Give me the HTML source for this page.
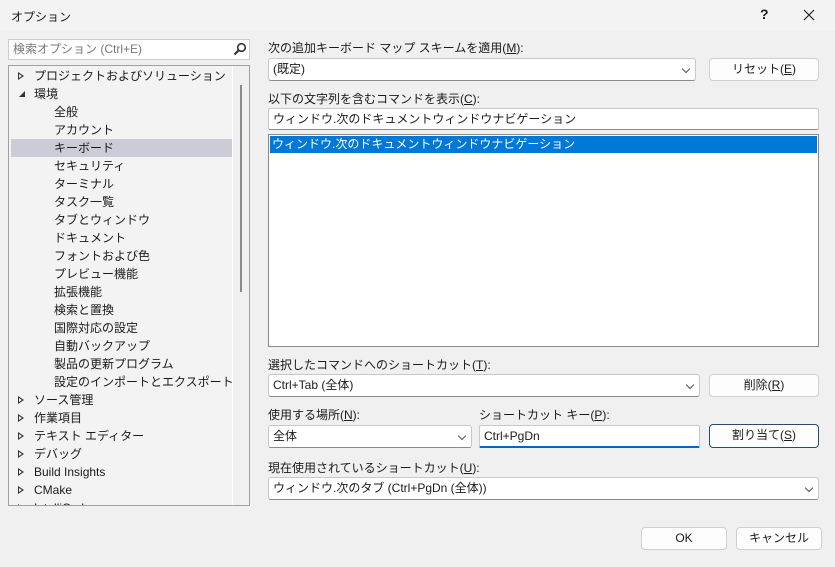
<!DOCTYPE html>
<html><head><meta charset="utf-8"><style>
*{box-sizing:border-box;margin:0;padding:0}
body{width:835px;height:567px;background:#f0f0f0;font-family:"Liberation Sans","Noto Sans CJK JP",sans-serif;font-size:12px;color:#1a1a1a;position:relative;overflow:hidden}
.a{position:absolute;white-space:nowrap}
.box{position:absolute;background:#fff;border:1px solid #c8c8c8;border-bottom-color:#8a8a8a;border-radius:3px;padding-left:4px;line-height:20px}
.btn{position:absolute;background:#fdfdfd;border:1px solid #d0d0d0;border-radius:4px;text-align:center;line-height:20px}
.chev{position:absolute;right:6px;top:7px;width:6px;height:6px;border-right:1px solid #555;border-bottom:1px solid #555;transform:rotate(45deg)}
.tree div{position:absolute;height:18px;line-height:18px;white-space:nowrap}
.tri{position:absolute;left:9px;top:5px;width:0;height:0;border-top:4px solid transparent;border-bottom:4px solid transparent;border-left:6px solid #333}
.tri:after{content:"";position:absolute;left:-5px;top:-2px;border-top:2px solid transparent;border-bottom:2px solid transparent;border-left:3px solid #f3f3f3}
u{text-decoration:underline}
</style></head><body>
<div class="a" style="left:0;top:0;width:835px;height:31px;background:#f3f3f3"></div>
<div class="a" style="left:11px;top:8px;font-size:12px">オプション</div>
<div class="a" style="left:760px;top:6px;font-size:14px;font-weight:bold">?</div>
<svg class="a" style="left:803px;top:9px" width="12" height="12"><path d="M1 1L11 11M11 1L1 11" stroke="#222" stroke-width="1.2"/></svg>

<div class="a" style="left:8px;top:39px;width:242px;height:21px;background:#fff;border:1px solid #ccc;padding-left:4px;line-height:19px;color:#777">検索オプション (Ctrl+E)</div>
<svg class="a" style="left:233px;top:42px" width="14" height="14"><circle cx="8.5" cy="5.5" r="3.8" fill="none" stroke="#333" stroke-width="1.6"/><line x1="6" y1="8" x2="1.5" y2="12.5" stroke="#333" stroke-width="2.2"/></svg>

<div class="a tree" style="left:8px;top:65px;width:242px;height:441px;border:1px solid #a0a0a0;background:#f3f3f3;overflow:hidden">
<div style="left:223px;top:0;width:17px;height:440px;background:#f0f0f0;border-left:1px solid #fff"></div>
<div style="left:231px;top:19px;width:2px;height:207px;background:#8a8a8a"></div>
<div style="left:2px;top:73px;width:221px;background:#cbccd6"></div>
<div style="left:0;top:1px"><span class="tri"></span><span style="margin-left:25px">プロジェクトおよびソリューション</span></div>
<div style="left:0;top:19px"><span style="position:absolute;left:10px;top:6px;border-left:6px solid transparent;border-bottom:6px solid #333"></span><span style="margin-left:25px">環境</span></div>
<div style="left:45px;top:37px">全般</div>
<div style="left:45px;top:55px">アカウント</div>
<div style="left:45px;top:73px">キーボード</div>
<div style="left:45px;top:91px">セキュリティ</div>
<div style="left:45px;top:109px">ターミナル</div>
<div style="left:45px;top:127px">タスク一覧</div>
<div style="left:45px;top:145px">タブとウィンドウ</div>
<div style="left:45px;top:163px">ドキュメント</div>
<div style="left:45px;top:181px">フォントおよび色</div>
<div style="left:45px;top:199px">プレビュー機能</div>
<div style="left:45px;top:217px">拡張機能</div>
<div style="left:45px;top:235px">検索と置換</div>
<div style="left:45px;top:253px">国際対応の設定</div>
<div style="left:45px;top:271px">自動バックアップ</div>
<div style="left:45px;top:289px">製品の更新プログラム</div>
<div style="left:45px;top:307px">設定のインポートとエクスポート</div>
<div style="left:0;top:325px"><span class="tri"></span><span style="margin-left:25px">ソース管理</span></div>
<div style="left:0;top:343px"><span class="tri"></span><span style="margin-left:25px">作業項目</span></div>
<div style="left:0;top:361px"><span class="tri"></span><span style="margin-left:25px">テキスト エディター</span></div>
<div style="left:0;top:379px"><span class="tri"></span><span style="margin-left:25px">デバッグ</span></div>
<div style="left:0;top:397px"><span class="tri"></span><span style="margin-left:25px">Build Insights</span></div>
<div style="left:0;top:415px"><span class="tri"></span><span style="margin-left:25px">CMake</span></div>
<div style="left:0;top:433px"><span class="tri"></span><span style="margin-left:25px">IntelliCode</span></div>
</div>

<div class="a" style="left:268px;top:39px">次の追加キーボード マップ スキームを適用(<u>M</u>):</div>
<div class="box" style="left:268px;top:58px;width:428px;height:23px">(既定)<span class="chev"></span></div>
<div class="btn" style="left:709px;top:58px;width:110px;height:23px">リセット(<u>E</u>)</div>
<div class="a" style="left:268px;top:90px">以下の文字列を含むコマンドを表示(<u>C</u>):</div>
<div class="box" style="left:268px;top:108px;width:551px;height:22px;border-radius:2px">ウィンドウ.次のドキュメントウィンドウナビゲーション</div>
<div class="a" style="left:268px;top:134px;width:551px;height:213px;background:#fff;border:1px solid #8a8a8a">
<div style="margin:1px;height:17px;background:#0078d7;color:#fff;line-height:17px;padding-left:2px">ウィンドウ.次のドキュメントウィンドウナビゲーション</div></div>

<div class="a" style="left:268px;top:356px">選択したコマンドへのショートカット(<u>T</u>):</div>
<div class="box" style="left:268px;top:374px;width:432px;height:23px">Ctrl+Tab (全体)<span class="chev"></span></div>
<div class="btn" style="left:709px;top:374px;width:110px;height:23px">削除(<u>R</u>)</div>
<div class="a" style="left:268px;top:406px">使用する場所(<u>N</u>):</div>
<div class="box" style="left:268px;top:425px;width:204px;height:23px">全体<span class="chev"></span></div>
<div class="a" style="left:479px;top:406px">ショートカット キー(<u>P</u>):</div>
<div class="box" style="left:479px;top:425px;width:221px;height:23px;border-bottom:2px solid #0067c0;border-radius:2px">Ctrl+PgDn</div>
<div class="btn" style="left:709px;top:424px;width:110px;height:24px;border-color:#2a4b6e">割り当て(<u>S</u>)</div>
<div class="a" style="left:268px;top:459px">現在使用されているショートカット(<u>U</u>):</div>
<div class="box" style="left:268px;top:477px;width:551px;height:23px">ウィンドウ.次のタブ (Ctrl+PgDn (全体))<span class="chev"></span></div>

<div class="btn" style="left:641px;top:527px;width:86px;height:23px">OK</div>
<div class="btn" style="left:736px;top:527px;width:86px;height:23px">キャンセル</div>
</body></html>
